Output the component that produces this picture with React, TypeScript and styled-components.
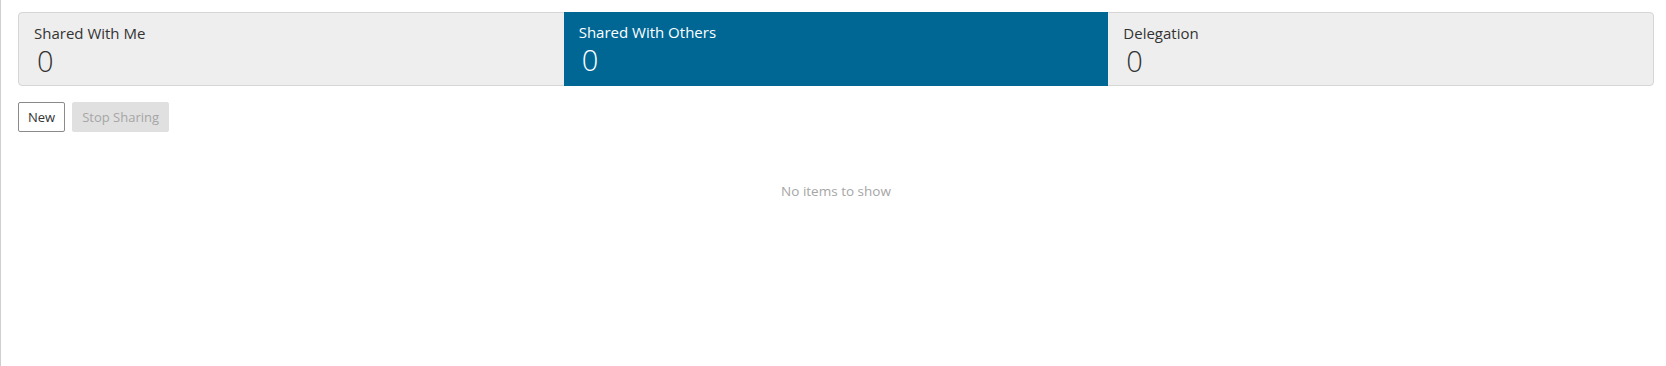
import styled, { createGlobalStyle } from "styled-components";

const GlobalStyle = createGlobalStyle`
  html, body {
    margin: 0;
    padding: 0;
    background: #fff;
  }
  body {
    font-family: "Open Sans", "Noto Sans", "Liberation Sans", sans-serif;
    color: #333;
  }
`;

const Page = styled.div`
  box-sizing: border-box;
  min-height: 366px;
  border-left: 1px solid #cfcfcf;
  padding: 12px 12px 0 17px;
`;

const Tiles = styled.div`
  display: grid;
  grid-template-columns: repeat(3, 1fr);
  height: 74px;
  box-sizing: border-box;
  border: 1px solid #d6d6d6;
  border-radius: 4px;
  background: #eeeeee;
`;

const Tile = styled.div<{ $active?: boolean }>`
  display: flex;
  flex-direction: column;
  padding: 10px 15px 0;
  margin: ${(p) => (p.$active ? "-1px 0" : "0")};
  background: ${(p) => (p.$active ? "#006795" : "transparent")};
  color: ${(p) => (p.$active ? "#fff" : "#333")};
  cursor: pointer;
`;

const TileTitle = styled.span`
  font-size: 15px;
  line-height: 20px;
`;

const TileCount = styled.span`
  font-size: 29px;
  line-height: 30px;
  font-weight: 300;
  margin: 3px 0 0 3px;
`;

const Toolbar = styled.div`
  display: flex;
  gap: 7px;
  margin-top: 16px;
`;

const Button = styled.button<{ $disabled?: boolean }>`
  height: 30px;
  padding: 0 9px;
  font-family: inherit;
  font-size: 13px;
  border-radius: 2px;
  border: 1px solid ${(p) => (p.$disabled ? "#e0e0e0" : "#8a8a8a")};
  background: ${(p) => (p.$disabled ? "#e0e0e0" : "#fff")};
  color: ${(p) => (p.$disabled ? "#a6a6a6" : "#333")};
  cursor: ${(p) => (p.$disabled ? "default" : "pointer")};
`;

const Empty = styled.div`
  text-align: center;
  margin-top: 50px;
  font-size: 13.5px;
  color: #a6a6a6;
`;

const tiles = [
  { title: "Shared With Me", count: 0 },
  { title: "Shared With Others", count: 0, active: true },
  { title: "Delegation", count: 0 },
];

export default function App() {
  return (
    <>
      <GlobalStyle />
      <Page>
        <Tiles>
          {tiles.map((t) => (
            <Tile key={t.title} $active={t.active}>
              <TileTitle>{t.title}</TileTitle>
              <TileCount>{t.count}</TileCount>
            </Tile>
          ))}
        </Tiles>
        <Toolbar>
          <Button>New</Button>
          <Button $disabled disabled>
            Stop Sharing
          </Button>
        </Toolbar>
        <Empty>No items to show</Empty>
      </Page>
    </>
  );
}
